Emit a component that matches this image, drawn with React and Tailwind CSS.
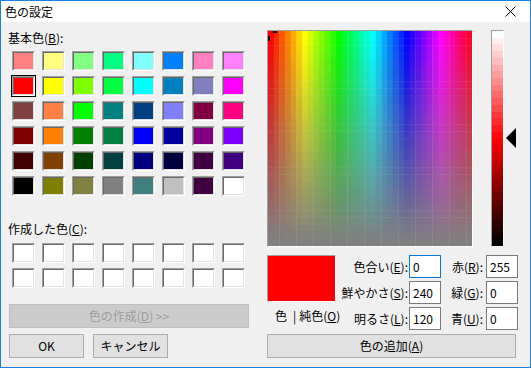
import React from "react";

const basic = [
  ["#FF8080", "#FFFF80", "#80FF80", "#00FF80", "#80FFFF", "#0080FF", "#FF80C0", "#FF80FF"],
  ["#FF0000", "#FFFF00", "#80FF00", "#00FF40", "#00FFFF", "#0080C0", "#8080C0", "#FF00FF"],
  ["#804040", "#FF8040", "#00FF00", "#008080", "#004080", "#8080FF", "#800040", "#FF0080"],
  ["#800000", "#FF8000", "#008000", "#008040", "#0000FF", "#0000A0", "#800080", "#8000FF"],
  ["#400000", "#804000", "#004000", "#004040", "#000080", "#000040", "#400040", "#400080"],
  ["#000000", "#808000", "#808040", "#808080", "#408080", "#C0C0C0", "#400040", "#FFFFFF"],
];

function hsl(h, s, l) {
  const c = (1 - Math.abs(2 * l - 1)) * s;
  const hp = h / 60;
  const x = c * (1 - Math.abs((hp % 2) - 1));
  let r = 0, g = 0, b = 0;
  if (hp < 1) [r, g, b] = [c, x, 0];
  else if (hp < 2) [r, g, b] = [x, c, 0];
  else if (hp < 3) [r, g, b] = [0, c, x];
  else if (hp < 4) [r, g, b] = [0, x, c];
  else if (hp < 5) [r, g, b] = [x, 0, c];
  else [r, g, b] = [c, 0, x];
  const m = l - c / 2;
  const f = (v) => Math.round((v + m) * 255);
  return `rgb(${f(r)},${f(g)},${f(b)})`;
}

function Swatch({ color, selected }) {
  return (
    <div className={selected ? "w-[25px] h-[22px] border border-black" : "w-[25px] h-[22px] border border-transparent"}>
      <div className="w-[23px] h-[20px] border border-t-[#a0a0a0] border-l-[#a0a0a0] border-b-white border-r-white">
        <div
          className="w-full h-full border border-t-[#696969] border-l-[#696969] border-b-[#e3e3e3] border-r-[#e3e3e3]"
          style={{ background: color }}
        />
      </div>
    </div>
  );
}

function Spectrum() {
  const cols = 36;
  const rows = 30;
  const rects = [];
  for (let r = 0; r < rows; r++) {
    for (let c = 0; c < cols; c++) {
      rects.push(
        <rect
          key={r + "-" + c}
          x={c}
          y={r}
          width={1.06}
          height={1.06}
          fill={hsl((c * 360) / cols, 1 - r / (rows - 1), 0.5)}
        />
      );
    }
  }
  return (
    <svg viewBox={`0 0 ${cols} ${rows}`} preserveAspectRatio="none" className="block w-full h-full">
      {rects}
    </svg>
  );
}

function LumBar() {
  const n = 32;
  const bands = [];
  for (let i = 0; i < n; i++) {
    bands.push(<div key={i} className="flex-1" style={{ background: hsl(0, 1, 1 - i / (n - 1)) }} />);
  }
  return <div className="flex flex-col w-full h-full">{bands}</div>;
}

function Field({ label, value, focused }) {
  return null;
}

export default function App() {
  return (
    <div className="w-[531px] h-[368px] border border-[#1b80d6] bg-[#f0f0f0] flex flex-col font-['Noto_Sans_CJK_JP',sans-serif] text-[12px] leading-[16px] text-black">
      {/* Title bar */}
      <div className="h-[21px] bg-white flex items-center justify-between pl-[4px] pr-[14px] shrink-0">
        <span className="text-[12px] leading-[16px]">色の設定</span>
        <svg width="11" height="11" viewBox="0 0 11 11" className="block">
          <path d="M0.5 0.5 L10.5 10.5 M10.5 0.5 L0.5 10.5" stroke="#000" strokeWidth="1" fill="none" />
        </svg>
      </div>

      <div className="flex flex-1">
        {/* Left column */}
        <div className="w-[266px] flex flex-col shrink-0">
          <div className="mt-[8px] ml-[7px] h-[16px]">
            基本色(<span className="underline">B</span>):
          </div>
          <div className="mt-[4px] ml-[10px] grid grid-cols-[repeat(8,25px)] gap-x-[5px] gap-y-[3px]">
            {basic.flatMap((row, ri) =>
              row.map((c, ci) => <Swatch key={ri + "-" + ci} color={c} selected={ri === 1 && ci === 0} />)
            )}
          </div>
          <div className="mt-[24px] ml-[7px] h-[16px]">
            作成した色(<span className="underline">C</span>):
          </div>
          <div className="mt-[5px] ml-[10px] grid grid-cols-[repeat(8,25px)] gap-x-[5px] gap-y-[3px]">
            {Array.from({ length: 16 }).map((_, i) => (
              <Swatch key={i} color="#ffffff" />
            ))}
          </div>
          <div className="mt-[15px] ml-[8px] w-[240px] h-[24px] bg-[#cccccc] border border-[#bfbfbf] flex items-center justify-center text-[#9c9c9c]">
            色の作成(<span className="underline">D</span>) &gt;&gt;
          </div>
          <div className="mt-[6px] ml-[8px] flex gap-[9px]">
            <div className="w-[75px] h-[24px] bg-[#e1e1e1] border border-[#adadad] flex items-center justify-center">OK</div>
            <div className="w-[75px] h-[24px] bg-[#e1e1e1] border border-[#adadad] flex items-center justify-center">キャンセル</div>
          </div>
        </div>

        {/* Right column */}
        <div className="flex flex-col pt-[8px]">
          <div className="flex items-start">
            <div className="relative w-[206px] h-[217px] border border-t-[#a0a0a0] border-l-[#a0a0a0] border-b-white border-r-white">
              <Spectrum />
              <div className="absolute left-[5px] top-0 w-[4px] h-[2px] bg-black" />
              <div className="absolute left-0 top-[5px] w-[2px] h-[5px] bg-black" />
            </div>
            <div className="ml-[18px] w-[13px] h-[217px] border border-t-[#a0a0a0] border-l-[#a0a0a0] border-b-white border-r-white">
              <LumBar />
            </div>
            <svg width="10" height="20" viewBox="0 0 10 20" className="block ml-[2px] mt-[98px]">
              <path d="M0 10 L10 0 L10 20 Z" fill="#000" />
            </svg>
          </div>

          <div className="mt-[8px] flex">
            <div className="w-[69px] flex flex-col">
              <div className="h-[47px] bg-[#ff0000] border border-t-[#a0a0a0] border-l-[#a0a0a0] border-b-white border-r-white" />
              <div className="mt-[6px] pl-[8px] h-[16px] whitespace-nowrap flex">
                <span>色</span>
                <span className="ml-[6px]">|</span>
                <span className="ml-[3px]">
                  純色(<span className="underline">O</span>)
                </span>
              </div>
            </div>
            <div className="grid grid-cols-[73px_32px_45px_32px] auto-rows-[23px] gap-y-[3px]">
              <div className="flex items-center justify-end pr-[1px] whitespace-nowrap">
                色合い(<span className="underline">E</span>):
              </div>
              <div className="bg-white border border-[#0078d7] flex items-center pl-[3px]">0</div>
              <div className="flex items-center justify-end pr-[3px] whitespace-nowrap">
                赤(<span className="underline">R</span>):
              </div>
              <div className="bg-white border border-[#7a7a7a] flex items-center pl-[3px]">255</div>

              <div className="flex items-center justify-end pr-[1px] whitespace-nowrap">
                鮮やかさ(<span className="underline">S</span>):
              </div>
              <div className="bg-white border border-[#7a7a7a] flex items-center pl-[3px]">240</div>
              <div className="flex items-center justify-end pr-[3px] whitespace-nowrap">
                緑(<span className="underline">G</span>):
              </div>
              <div className="bg-white border border-[#7a7a7a] flex items-center pl-[3px]">0</div>

              <div className="flex items-center justify-end pr-[1px] whitespace-nowrap">
                明るさ(<span className="underline">L</span>):
              </div>
              <div className="bg-white border border-[#7a7a7a] flex items-center pl-[3px]">120</div>
              <div className="flex items-center justify-end pr-[3px] whitespace-nowrap">
                青(<span className="underline">U</span>):
              </div>
              <div className="bg-white border border-[#7a7a7a] flex items-center pl-[3px]">0</div>
            </div>
          </div>

          <div className="mt-[4px] w-[249px] h-[24px] bg-[#e1e1e1] border border-[#adadad] flex items-center justify-center">
            色の追加(<span className="underline">A</span>)
          </div>
        </div>
      </div>
    </div>
  );
}
